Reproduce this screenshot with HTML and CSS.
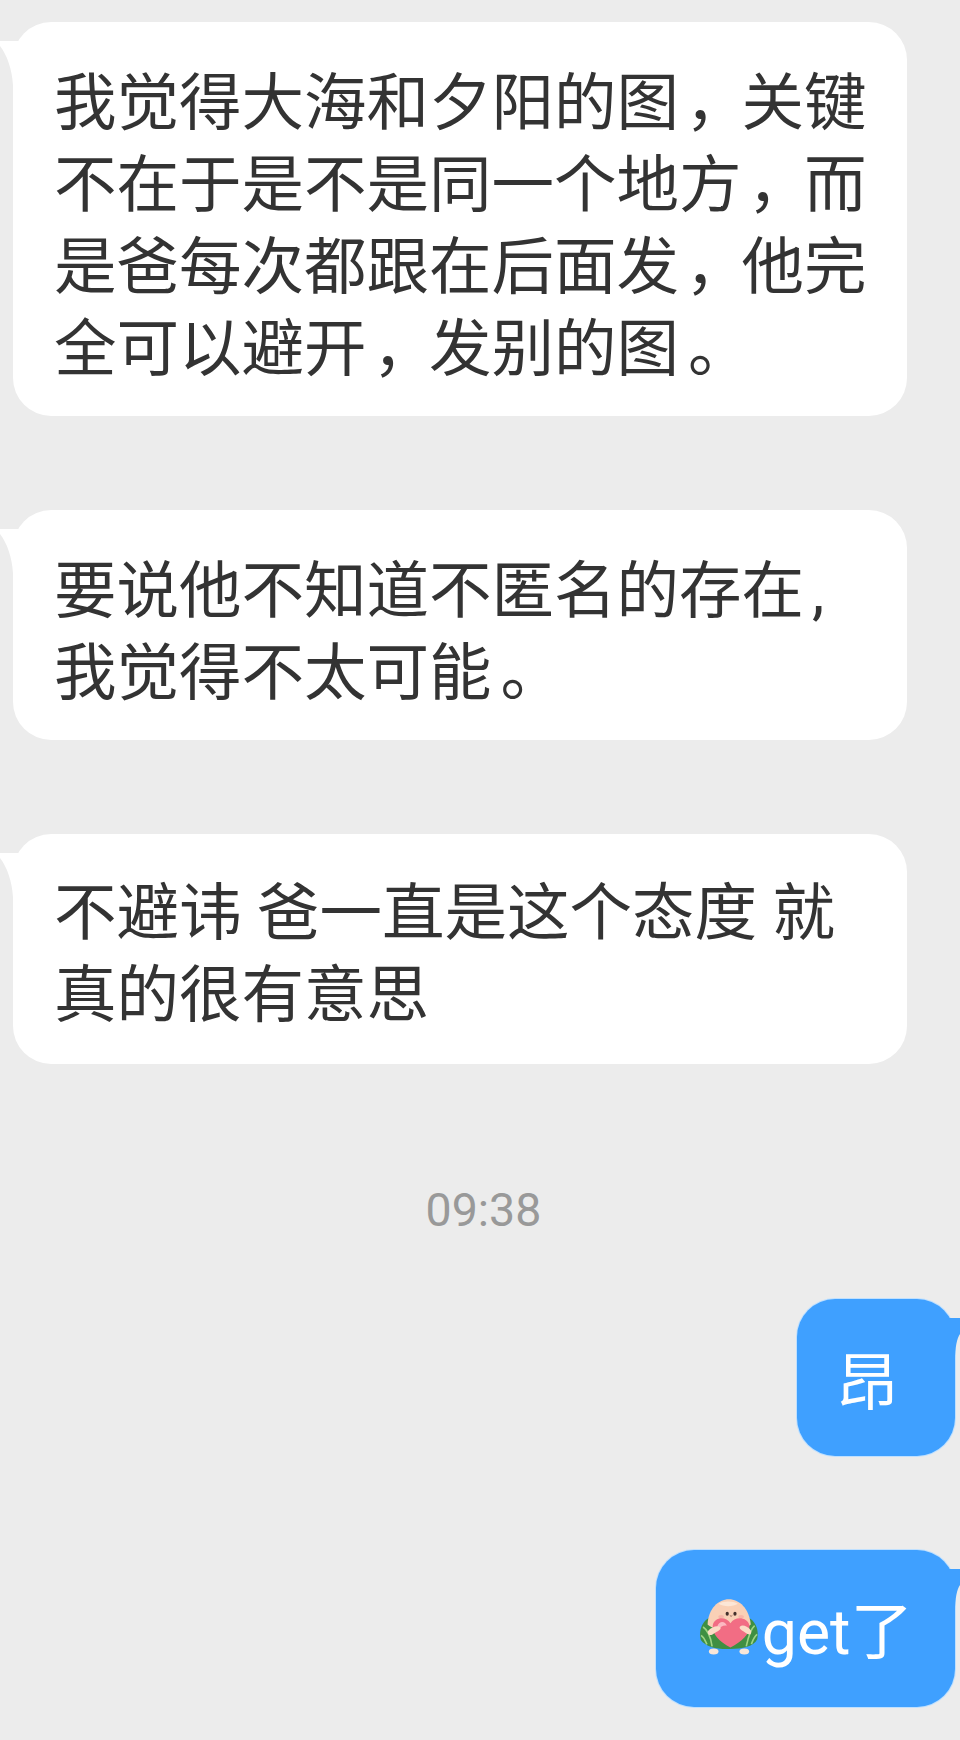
FILE: index.html
```html
<!DOCTYPE html>
<html lang="zh-CN">
<head>
    <meta charset="UTF-8">
    <title>聊天</title>
    <link rel="stylesheet" href="styles.css">
</head>
<body>
    <div class="chat">
        <div class="bubble left">
            <svg class="tail" viewBox="0 0 20 44"><path d="M0 0 L20 0 L20 44 L13 44 C12 28 7 14 0 5 Z"/></svg>
            <div>我觉得大海和夕阳的图<span class="cm">，</span>关键</div>
            <div>不在于是不是同一个地方<span class="cm">，</span>而</div>
            <div>是爸每次都跟在后面发<span class="cm">，</span>他完</div>
            <div>全可以避开<span class="cm">，</span>发别的图<span class="pt">。</span></div>
        </div>
        <div class="bubble left">
            <svg class="tail" viewBox="0 0 20 44"><path d="M0 0 L20 0 L20 44 L13 44 C12 28 7 14 0 5 Z"/></svg>
            <div>要说他不知道不匿名的存在<span class="en">,</span></div>
            <div>我觉得不太可能<span class="pt">。</span></div>
        </div>
        <div class="bubble left raised">
            <svg class="tail" viewBox="0 0 20 44"><path d="M0 0 L20 0 L20 44 L13 44 C12 28 7 14 0 5 Z"/></svg>
            <div>不避讳 爸一直是这个态度 就</div>
            <div>真的很有意思</div>
        </div>

        <div class="time">09:38</div>

        <div class="bubble right single">
            <svg class="tail" viewBox="0 0 13 44"><path d="M0 0 L13 0 L13 16 C10 20 8 30 8 42 L0 42 Z"/></svg>
            <span>昂</span>
        </div>
        <div class="bubble right">
            <svg class="tail" viewBox="0 0 13 44"><path d="M0 0 L13 0 L13 16 C10 20 8 30 8 42 L0 42 Z"/></svg>
            <svg class="emoji" viewBox="10 22 185 180">
                <ellipse cx="55" cy="188" rx="15" ry="9" fill="#f8e6d8"/>
                <ellipse cx="150" cy="188" rx="15" ry="9" fill="#f8e6d8"/>
                <path d="M40 84 C18 96 8 125 15 152 C30 174 70 182 105 180 C145 180 180 172 190 150 C196 122 186 96 165 84 Z" fill="#3f8f42"/>
                <path d="M22 112 C38 122 46 145 50 172 M16 138 C26 145 30 158 34 166 M182 108 C168 120 162 145 156 172 M190 135 C180 142 176 155 172 165" stroke="#9fd585" stroke-width="5" fill="none"/>
                <path d="M36 104 C38 55 70 26 102 26 C135 26 165 55 170 104 C150 128 58 128 36 104 Z" fill="#f9d0b6"/>
                <path d="M70 40 C85 30 115 30 130 40 C115 50 85 50 70 40 Z" fill="#fce6d6"/>
                <ellipse cx="97" cy="71" rx="5" ry="6" fill="#43302c"/>
                <ellipse cx="121" cy="71" rx="5" ry="6" fill="#43302c"/>
                <path d="M105 76 Q109 82 113 76" stroke="#8a5a50" stroke-width="2.5" fill="none"/>
                <ellipse cx="78" cy="80" rx="9" ry="5" fill="#f8b5a8"/>
                <ellipse cx="140" cy="80" rx="9" ry="5" fill="#f8b5a8"/>
                <path d="M107 176 C72 156 50 135 52 108 C55 82 92 76 107 100 C122 76 162 82 166 108 C168 135 142 156 107 176 Z" fill="#f26d84"/>
                <path d="M72 100 C82 93 92 98 96 108 C85 106 75 112 68 122 C64 114 66 105 72 100 Z" fill="#fcb8c2"/>
                <path d="M38 124 C50 110 68 106 76 113 C80 121 62 128 50 136 C40 140 34 133 38 124 Z" fill="#fbdcc6"/>
                <path d="M170 122 C158 108 144 104 136 111 C132 119 150 126 160 134 C170 138 174 131 170 122 Z" fill="#fbdcc6"/>
            </svg><span>get了</span>
        </div>
    </div>
</body>
</html>
```

FILE: styles.css
```css
body {
    margin: 0;
    background-color: #ececec;
    font-family: Roboto, "Noto Sans CJK SC", sans-serif;
}

.chat {
    display: flex;
    flex-direction: column;
    padding-top: 22px;
    height: 1718px;
    overflow: hidden;
}

.bubble {
    position: relative;
    box-sizing: border-box;
    margin-bottom: 94px;
    font-size: 62.5px;
    line-height: 82px;
    border-radius: 38px;
}

.bubble.left {
    width: 894px;
    margin-left: 13px;
    padding: 41px 36px 25px 41px;
    background-color: #fff;
    color: #333;
}

.bubble.left.raised {
    padding-top: 39px;
    padding-bottom: 27px;
}

.bubble.right {
    align-self: flex-end;
    display: flex;
    align-items: center;
    margin-right: 5px;
    padding: 42px 42px 33px 43px;
    background-color: #3fa0ff;
    color: #fff;
    box-shadow: 0 0 0 1px #bfe0ff;
}

.bubble.single {
    width: 158px;
    padding-top: 44px;
    padding-bottom: 31px;
    padding-left: 39px;
}

/* half width punctuation, pushed to the middle of a full cell */
.cm {
    font-feature-settings: "halt";
    margin-left: 6px;
    margin-right: calc(0.5em - 6px);
}

.pt {
    font-feature-settings: "halt";
    margin-left: 9px;
    margin-right: calc(0.5em - 9px);
}

.en {
    margin-left: 8px;
}

.tail {
    position: absolute;
    top: 19px;
    width: 20px;
    height: 44px;
}

.left .tail {
    left: -13px;
    fill: #fff;
}

.right .tail {
    right: -5px;
    width: 13px;
    fill: #3fa0ff;
}

.time {
    margin: 22px 0 59px;
    padding-left: 7px;
    text-align: center;
    font-size: 46.5px;
    line-height: 60px;
    color: #999;
}

.emoji {
    width: 60px;
    height: 58px;
    margin-right: 3px;
    margin-bottom: 12px;
}
```
